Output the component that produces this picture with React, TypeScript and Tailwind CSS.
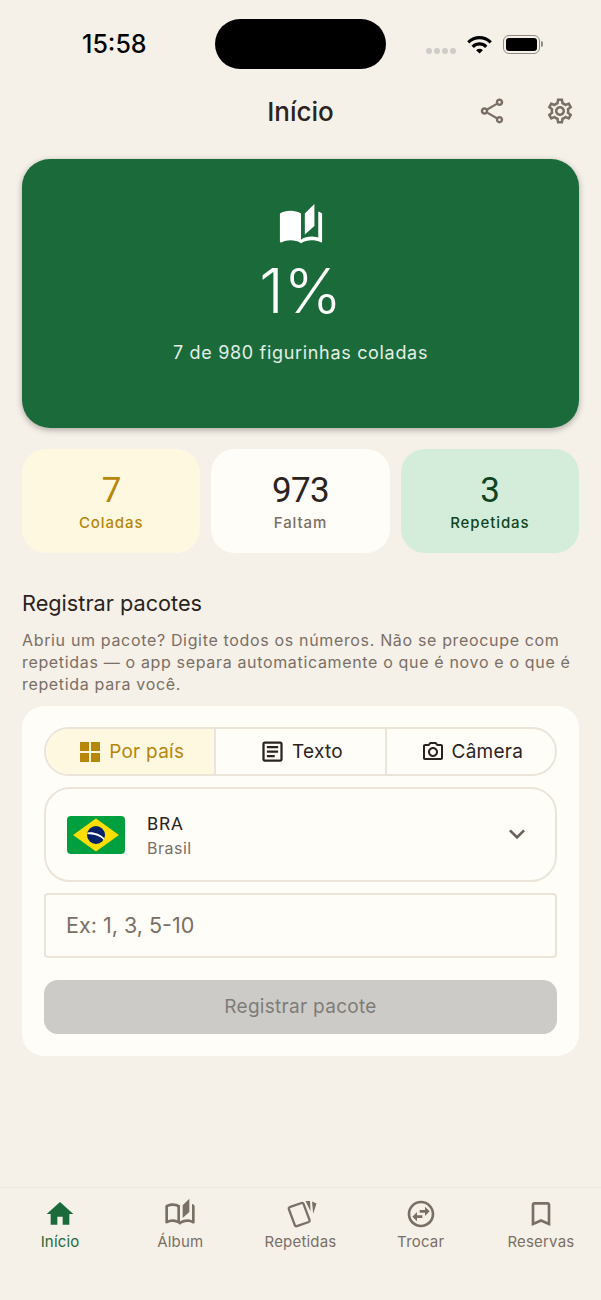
import React from 'react'
import {
  MdAutoStories,
  MdHome,
  MdKeyboardArrowDown,
  MdOutlineArticle,
  MdOutlineAutoStories,
  MdOutlineBookmarkBorder,
  MdOutlinePhotoCamera,
  MdOutlineSettings,
  MdOutlineShare,
  MdOutlineSwapHorizontalCircle,
  MdWifi,
} from 'react-icons/md'

const sans = "font-['Inter','Noto_Sans',sans-serif]"

function StatusBar() {
  return (
    <div className="flex h-[88px] items-start pt-[19px] pl-[82px]">
      <span className="mt-[10px] w-[133px] shrink-0 text-[25px] leading-[30px] font-medium text-black">15:58</span>
      <div className="h-[50px] w-[171px] shrink-0 rounded-[25px] bg-black" />
      <div className="ml-[40px] flex h-[50px] shrink-0 items-center">
        <div className="mt-[13px] flex gap-[2px]">
          <span className="size-[6px] rounded-full bg-[#cfcdc9]" />
          <span className="size-[6px] rounded-full bg-[#cfcdc9]" />
          <span className="size-[6px] rounded-full bg-[#cfcdc9]" />
          <span className="size-[6px] rounded-full bg-[#cfcdc9]" />
        </div>
        <MdWifi className="ml-[10px] size-[27px] text-black" />
        <div className="ml-[10px] flex items-center">
          <div className="flex h-[19px] w-[37px] rounded-[6px] border border-[#8f8a84] p-[2px]">
            <div className="flex-1 rounded-[3px] bg-black" />
          </div>
          <div className="ml-[1px] h-[6px] w-[2px] rounded-r-sm bg-[#8f8a84]" />
        </div>
      </div>
    </div>
  )
}

function Header() {
  return (
    <div className="relative flex h-[46px] items-center justify-center">
      <h1 className="mt-[1px] text-[26px] leading-[34px] font-medium text-[#2a2320]">Início</h1>
      <div className="absolute top-[8px] right-[26px] flex items-center gap-[38px] text-[#7a6f65]">
        <MdOutlineShare className="size-[30px]" />
        <MdOutlineSettings className="size-[30px]" />
      </div>
    </div>
  )
}

function Hero() {
  return (
    <div className="mx-[22px] mt-[25px] flex h-[269px] flex-col items-center rounded-[28px] bg-[#1b6b3a] pt-[43px] text-white shadow-[0_2px_6px_rgba(0,0,0,0.3)]">
      <MdAutoStories className="size-[46px]" />
      <div className="mt-[7px] text-[62px] leading-[72px] font-light">1%</div>
      <div className="mt-[14px] text-[18px] leading-[24px] tracking-[0.68px] text-[#e3eee7]">7 de 980 figurinhas coladas</div>
    </div>
  )
}

function Stat({ value, label, bg, color, labelColor }: { value: string; label: string; bg: string; color: string; labelColor: string }) {
  return (
    <div className={`flex h-[104px] flex-1 flex-col items-center rounded-[24px] pt-[22px] ${bg}`}>
      <span className={`font-['Roboto',sans-serif] text-[35px] leading-[40px] font-normal tracking-[-0.6px] ${color}`}>{value}</span>
      <span className={`mt-[2px] text-[15px] leading-[20px] font-[450] tracking-[0.9px] ${labelColor}`}>{label}</span>
    </div>
  )
}

function Tab({ icon, label, className }: { icon: React.ReactNode; label: string; className: string }) {
  return (
    <div className={`flex flex-1 items-center justify-center gap-[9px] pl-[4px] text-[19px] font-normal tracking-[0.25px] ${className}`}>
      {icon}
      <span className="mt-[1px]">{label}</span>
    </div>
  )
}

function BrazilFlag() {
  return (
    <svg width="58" height="38" viewBox="0 0 58 38">
      <rect width="58" height="38" rx="4" fill="#00a03e" />
      <path d="M29 2.5 L52 19 L29 35.5 L6 19 Z" fill="#fedd00" />
      <circle cx="29" cy="19" r="9" fill="#012169" />
      <path d="M20.5 16.5 C26 15.5 33 17.5 37.5 22.5 L37 24 C32.5 19.5 26 17.5 20.3 18.3 Z" fill="#fff" />
    </svg>
  )
}

function CardsIcon() {
  return (
    <svg width="32" height="32" viewBox="0 0 32 32" fill="currentColor">
      <path
        d="M4.6 9.2 L16.6 5 Q18 4.6 18.5 5.9 L24.6 22.2 Q25 23.5 23.8 24 L11.8 28.2 Q10.4 28.6 9.9 27.3 L3.8 11 Q3.4 9.7 4.6 9.2 Z"
        fill="none"
        stroke="currentColor"
        strokeWidth="2.3"
        strokeLinejoin="round"
      />
      <path d="M20.5 3 L25 3 L25.6 13.5 Z" />
      <path d="M27 3.4 L31.5 5.6 L28.2 15.8 Z" />
    </svg>
  )
}

function NavItem({ icon, label, active }: { icon: React.ReactNode; label: string; active?: boolean }) {
  return (
    <div className={`flex flex-1 flex-col items-center ${active ? 'text-[#1b6b3a]' : 'text-[#7a6f65]'}`}>
      {icon}
      <span className="mt-[2px] text-[15px] leading-[20px] font-normal tracking-[0.2px]">{label}</span>
    </div>
  )
}

export default function App() {
  return (
    <div className={`flex h-[1300px] w-[601px] flex-col overflow-hidden bg-[#f5f0e8] ${sans}`}>
      <StatusBar />
      <Header />
      <Hero />

      <div className="mx-[22px] mt-[21px] flex gap-[11px]">
        <Stat value="7" label="Coladas" bg="bg-[#fef8e1]" color="text-[#b8860b]" labelColor="text-[#b8860b]" />
        <Stat value="973" label="Faltam" bg="bg-[#fffdf8]" color="text-[#2a2320]" labelColor="text-[#7a6f65]" />
        <Stat value="3" label="Repetidas" bg="bg-[#d4edda]" color="text-[#0f4423]" labelColor="text-[#0f4423]" />
      </div>

      <h2 className="mx-[22px] mt-[36px] text-[21.7px] leading-[28px] font-normal text-[#2a2320]">Registrar pacotes</h2>
      <p className="mx-[22px] mt-[12px] text-[16px] leading-[22px] tracking-[0.66px] text-[#7a6f65]">
        Abriu um pacote? Digite todos os números. Não se preocupe com repetidas — o app separa automaticamente o que é novo e o que é repetida para você.
      </p>

      <div className="mx-[22px] mt-[11px] flex h-[350px] flex-col rounded-[22px] bg-[#fffdf8] px-[22px] pt-[21px]">
        <div className="flex h-[49px] overflow-hidden rounded-[25px] border-2 border-[#ebe4d9]">
          <Tab
            label="Por país"
            className="border-r-2 border-[#ebe4d9] bg-[#fef8e1] text-[#b8860b]"
            icon={
              <span className="grid size-[20px] grid-cols-2 gap-[2px]">
                <span className="bg-[#b8860b]" />
                <span className="bg-[#b8860b]" />
                <span className="bg-[#b8860b]" />
                <span className="bg-[#b8860b]" />
              </span>
            }
          />
          <Tab label="Texto" className="border-r-2 border-[#ebe4d9] text-[#2a2320]" icon={<MdOutlineArticle className="-mx-[3px] size-[27px]" />} />
          <Tab label="Câmera" className="text-[#2a2320]" icon={<MdOutlinePhotoCamera className="-mx-[2px] size-[24px]" />} />
        </div>

        <div className="mt-[11px] flex h-[95px] items-center rounded-[26px] border-2 border-[#ebe4d9] pr-[22px] pl-[21px]">
          <BrazilFlag />
          <div className="ml-[22px] flex flex-1 flex-col">
            <span className="font-['Roboto',sans-serif] text-[18px] leading-[26px] font-normal tracking-[0.9px] text-[#2a2320]">BRA</span>
            <span className="text-[16px] leading-[22px] tracking-[0.5px] text-[#7a6f65]">Brasil</span>
          </div>
          <MdKeyboardArrowDown className="-mt-[1px] size-[32px] text-[#6b625a]" />
        </div>

        <div className="mt-[11px] flex h-[65px] items-center rounded-[4px] border-2 border-[#ebe4d9] px-[20px] text-[21.5px] text-[#7a6f65]">
          Ex: 1, 3, 5-10
        </div>

        <div className="mt-[22px] flex h-[54px] items-center justify-center rounded-[14px] bg-[#cdcbc7] text-[19px] font-normal tracking-[0.3px] text-[#7f7c78]">
          Registrar pacote
        </div>
      </div>

      <div className="flex-1" />

      <div className="flex h-[113px] border-t border-[#ebe5da] pt-[10px]">
        <NavItem active label="Início" icon={<MdHome className="size-[32px]" />} />
        <NavItem label="Álbum" icon={<MdOutlineAutoStories className="size-[32px]" />} />
        <NavItem label="Repetidas" icon={<CardsIcon />} />
        <NavItem label="Trocar" icon={<MdOutlineSwapHorizontalCircle className="size-[32px]" />} />
        <NavItem label="Reservas" icon={<MdOutlineBookmarkBorder className="size-[32px]" />} />
      </div>
    </div>
  )
}
